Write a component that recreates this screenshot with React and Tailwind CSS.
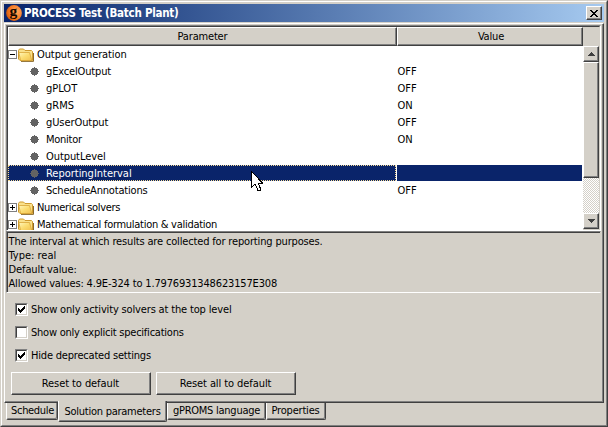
import React from "react";

const RAISED = "border border-t-white border-l-white border-b-[#404040] border-r-[#404040] shadow-[inset_-1px_-1px_0_#808080]";

const rows = [
  { name: "Output generation", folder: true, open: true, t: "tracking-[-0.1px]" },
  { name: "gExcelOutput", value: "OFF", t: "tracking-[-0.15px]" },
  { name: "gPLOT", value: "OFF", t: "tracking-normal" },
  { name: "gRMS", value: "ON", t: "tracking-normal" },
  { name: "gUserOutput", value: "OFF", t: "tracking-[-0.08px]" },
  { name: "Monitor", value: "ON", t: "tracking-[-0.25px]" },
  { name: "OutputLevel", t: "tracking-[-0.08px]" },
  { name: "ReportingInterval", selected: true, t: "tracking-[-0.02px]" },
  { name: "ScheduleAnnotations", value: "OFF", t: "tracking-[-0.18px]" },
  { name: "Numerical solvers", folder: true, t: "tracking-[-0.34px]" },
  { name: "Mathematical formulation & validation", folder: true, t: "tracking-[-0.28px]" },
];

function Logo() {
  return (
    <svg width="16" height="16" viewBox="0 0 16 16" className="shrink-0 overflow-visible">
      <defs>
        <radialGradient id="ball" cx="0.7" cy="0.4" r="0.8">
          <stop offset="0" stopColor="#ffa45a" />
          <stop offset="0.6" stopColor="#f57a22" />
          <stop offset="1" stopColor="#c04e06" />
        </radialGradient>
      </defs>
      <circle cx="8" cy="8" r="7.9" fill="url(#ball)" />
      <text x="7.4" y="10.8" textAnchor="middle" fontFamily="Liberation Serif, serif" fontWeight="bold" fontSize="15.5" letterSpacing="0" fill="#120800">g</text>
    </svg>
  );
}

function Folder() {
  return (
    <svg width="16" height="14" viewBox="0 0 16 14" className="shrink-0">
      <defs>
        <linearGradient id="fold" x1="0" y1="0" x2="1" y2="1">
          <stop offset="0" stopColor="#fff6bd" />
          <stop offset="0.5" stopColor="#fbdc70" />
          <stop offset="1" stopColor="#f0c050" />
        </linearGradient>
      </defs>
      <path d="M3 13.4H15.5V5" fill="none" stroke="#8a6a2a" strokeWidth="1" />
      <path d="M0.5 11V2.5L1.5 1H5.5L7 2.5H13.5L14.5 3.5V12.5H2Z" fill="#f9e08a" stroke="#cf9a2e" />
      <path d="M0.8 4.5H11.5L13.8 12.5H2.6Z" fill="url(#fold)" stroke="#d9a637" strokeWidth="0.8" />
    </svg>
  );
}

function Expander({ open }) {
  return (
    <svg width="9" height="9" viewBox="0 0 9 9" shapeRendering="crispEdges" className="shrink-0">
      <rect x="0.5" y="0.5" width="8" height="8" fill="#fff" stroke="#808080" />
      <path d={open ? "M2 4.5H7" : "M2 4.5H7M4.5 2V7"} stroke="#000" />
    </svg>
  );
}

function Bullet() {
  return (
    <svg width="9" height="9" viewBox="0 0 9 9" shapeRendering="crispEdges" className="shrink-0">
      <path d="M4 0h1v1h2v1h1v2h1v1h-1v2h-1v1h-2v1h-1v-1h-2v-1h-1v-2h-1v-1h1v-2h1v-1h2z" fill="#636363" />
    </svg>
  );
}

function Row({ row }) {
  const sel = row.selected;
  return (
    <div className="flex h-[17px] shrink-0">
      <div
        className={
          "flex h-4 w-[388px] items-center border border-dotted " +
          (sel ? "border-[#f5db95] bg-[#0a246a] text-white" : "border-transparent")
        }
      >
        {row.folder ? (
          <div className="-ml-px flex items-center pt-px">
            <Expander open={row.open} />
            <div className="ml-px"><Folder /></div>
            <span className={"ml-[3px] " + row.t}>{row.name}</span>
          </div>
        ) : (
          <div className="flex items-center pl-[21px]">
            <Bullet />
            <span className={"ml-[7px] pt-[2px] " + row.t}>{row.name}</span>
          </div>
        )}
      </div>
      <div className={"ml-px flex h-4 w-[185px] items-center pt-[2px] pl-[0.5px] " + (sel ? "bg-[#0a246a]" : "")}>{row.value}</div>
    </div>
  );
}

function ScrollButton({ down }) {
  return (
    <div className={"flex h-4 w-4 shrink-0 items-center justify-center bg-[#d4d0c8] " + RAISED}>
      <svg width="7" height="4" viewBox="0 0 7 4" shapeRendering="crispEdges">
        <path d={down ? "M0 0h7v1h-1v1h-1v1h-1v1h-1v-1h-1v-1h-1v-1h-1z" : "M3 0h1v1h1v1h1v1h1v1h-7v-1h1v-1h1v-1h1z"} fill="#404040" />
      </svg>
    </div>
  );
}

function Check({ on, label, t }) {
  return (
    <div className="flex h-[13px] items-center">
      <div className="h-[13px] w-[13px] border border-t-[#808080] border-l-[#808080] border-b-white border-r-white">
        <div className="h-[11px] w-[11px] border border-t-[#404040] border-l-[#404040] border-b-[#d4d0c8] border-r-[#d4d0c8] bg-white">
          {on && (
            <svg width="9" height="9" viewBox="0 0 9 9" shapeRendering="crispEdges">
              <path d="M1 3h1v1h1v1h1v-1h1v-1h1v-1h1v-1h1v3h-1v1h-1v1h-1v1h-1v1h-1v-1h-1v-1h-1z" fill="#000" />
            </svg>
          )}
        </div>
      </div>
      <span className={"ml-[3px] " + t}>{label}</span>
    </div>
  );
}

function Button({ children }) {
  return <button className={"flex h-[23px] w-[140px] items-center justify-center pr-px tracking-[-0.08px] " + RAISED}>{children}</button>;
}

const TAB = "flex items-center justify-center border-l border-l-white border-b border-r border-b-[#404040] border-r-[#404040] shadow-[inset_-1px_-1px_0_#808080] rounded-b-[2px] ";

export default function App() {
  return (
    <div className="h-[427px] w-[608px] overflow-hidden border border-[#d4d0c8] border-b-[#404040] border-r-[#404040] bg-[#d4d0c8] font-['DejaVu_Sans_Condensed','DejaVu_Sans',sans-serif] text-[11px] leading-[14px] whitespace-nowrap text-black [font-stretch:condensed]">
      <div className="flex h-[425px] w-[606px] flex-col border border-t-white border-l-white border-b-[#808080] border-r-[#808080] px-[2px] pt-[2px]">
        <div className="flex h-[18px] w-[600px] shrink-0 items-center bg-linear-to-r from-[#0a246a] to-[#a6caf0] pl-[2px]">
          <Logo />
          <span className="ml-[2px] text-[11.5px] font-bold tracking-[-0.25px] text-white">PROCESS Test (Batch Plant)</span>
          <div className={"mr-[2px] ml-auto flex h-[14px] w-4 items-center justify-center bg-[#d4d0c8] " + RAISED}>
            <svg width="8" height="7" viewBox="0 0 8 7" shapeRendering="crispEdges">
              <path d="M0 0h2v1h1v1h2v-1h1v-1h2v1h-1v1h-1v1h-1v1h1v1h1v1h1v1h-2v-1h-1v-1h-2v1h-1v1h-2v-1h1v-1h1v-1h1v-1h-1v-1h-1v-1h-1z" fill="#000" />
            </svg>
          </div>
        </div>

        <div className="mt-px flex h-[380px] w-[600px] shrink-0 flex-col border border-t-white border-l-white border-b-[#404040] border-r-[#404040] shadow-[inset_-1px_-1px_0_#808080]">
          <div className="mt-px ml-px h-[206px] w-[595px] border border-t-[#808080] border-l-[#808080] border-b-white border-r-white">
            <div className="flex h-[204px] w-[593px] flex-col border border-b-0 border-t-[#404040] border-l-[#404040] border-r-[#d4d0c8]">
              <div className="flex h-[19px] shrink-0 tracking-[-0.18px]">
                <div className={"flex w-[389px] items-center justify-center " + RAISED}>Parameter</div>
                <div className={"flex w-[186px] items-center justify-center pl-[2px] " + RAISED}>Value</div>
              </div>
              <div className="flex h-[184px] w-[591px]">
                <div className="flex h-[184px] w-[575px] flex-col overflow-hidden bg-white">
                  {rows.map((r) => <Row key={r.name} row={r} />)}
                </div>
                <div className="flex h-[183px] w-4 flex-col bg-[repeating-conic-gradient(#d4d0c8_0_25%,#fff_0_50%)] bg-[length:2px_2px]">
                  <ScrollButton />
                  <div className={"h-[116px] w-4 bg-[#d4d0c8] " + RAISED} />
                  <div className="mt-auto"><ScrollButton down /></div>
                </div>
              </div>
            </div>
          </div>

          <div className="ml-px h-[62px] w-[595px] border border-t-[#808080] border-l-[#808080] border-b-white border-r-[#d4d0c8]">
            <div className="h-[60px] border-t border-l border-[#404040] pt-[2px] pl-[0.5px]">
              <div className="tracking-[-0.16px]">The interval at which results are collected for reporting purposes.</div>
              <div>Type: real</div>
              <div className="tracking-[-0.1px]">Default value:</div>
              <div className="tracking-[-0.16px]">Allowed values: 4.9E-324 to 1.7976931348623157E308</div>
            </div>
          </div>

          <div className="mt-[10px] ml-[10px] flex flex-col gap-[10px]">
            <Check on label="Show only activity solvers at the top level" t="tracking-[-0.155px]" />
            <Check label="Show only explicit specifications" t="tracking-[-0.23px]" />
            <Check on label="Hide deprecated settings" t="tracking-[-0.2px]" />
          </div>

          <div className="mt-[10px] ml-[6px] flex gap-[5px]">
            <Button>Reset to default</Button>
            <Button>Reset all to default</Button>
          </div>
        </div>

        <div className="flex shrink-0 items-start pl-[2px]">
          <div className={TAB + "h-[17px] w-[52px] pl-px tracking-[-0.34px]"}>Schedule</div>
          <div className={TAB + "relative -mt-[2px] h-[21px] w-[109px] bg-[#d4d0c8] pt-[2px] tracking-[-0.25px]"}>Solution parameters</div>
          <div className={TAB + "h-[17px] w-[99px] tracking-[-0.25px]"}>gPROMS language</div>
          <div className={TAB + "h-[17px] w-[60px] pr-px tracking-[-0.2px]"}>Properties</div>
        </div>
      </div>

      <svg className="absolute top-[171px] left-[251px]" width="12" height="21" viewBox="0 0 12 21" shapeRendering="crispEdges">
        <path d="M0.5 0.5V16.5L4 13L7 19.5H9.5V17.5L7 12H11.5Z" fill="#fff" stroke="#000" />
      </svg>
    </div>
  );
}
